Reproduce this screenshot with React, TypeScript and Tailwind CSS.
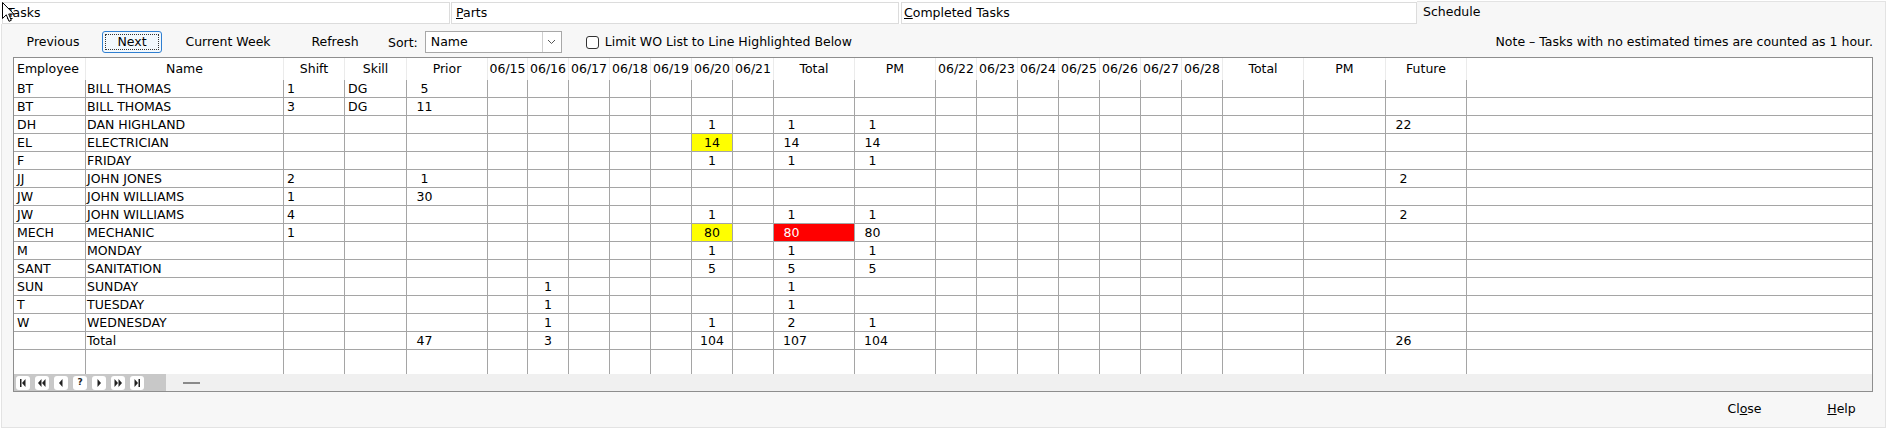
import React from "react";

type Align = "left" | "center" | "num" | "none";

interface Col {
  h: string;
  align: Align;
  headAlign?: "left" | "center";
}

const dates1 = ["06/15", "06/16", "06/17", "06/18", "06/19", "06/20", "06/21"];
const dates2 = ["06/22", "06/23", "06/24", "06/25", "06/26", "06/27", "06/28"];

const cols: Col[] = [
  { h: "Employee", align: "left", headAlign: "left" },
  { h: "Name", align: "left" },
  { h: "Shift", align: "left" },
  { h: "Skill", align: "left" },
  { h: "Prior", align: "num" },
  ...dates1.map((d) => ({ h: d, align: "center" as Align })),
  { h: "Total", align: "num" },
  { h: "PM", align: "num" },
  ...dates2.map((d) => ({ h: d, align: "center" as Align })),
  { h: "Total", align: "num" },
  { h: "PM", align: "num" },
  { h: "Future", align: "num" },
  { h: "", align: "none" },
];

// column indexes
const PRIOR = 4;
const D16 = 6;
const D20 = 10;
const TOTAL = 12;
const PM = 13;
const FUTURE = 23;

type Cell = string | { v: string; bg: "yellow" | "red" };

interface Row {
  emp: string;
  name: string;
  shift?: string;
  skill?: string;
  vals?: Record<number, Cell>;
}

const rows: Row[] = [
  { emp: "BT", name: "BILL THOMAS", shift: "1", skill: "DG", vals: { [PRIOR]: "5" } },
  { emp: "BT", name: "BILL THOMAS", shift: "3", skill: "DG", vals: { [PRIOR]: "11" } },
  { emp: "DH", name: "DAN HIGHLAND", vals: { [D20]: "1", [TOTAL]: "1", [PM]: "1", [FUTURE]: "22" } },
  { emp: "EL", name: "ELECTRICIAN", vals: { [D20]: { v: "14", bg: "yellow" }, [TOTAL]: "14", [PM]: "14" } },
  { emp: "F", name: "FRIDAY", vals: { [D20]: "1", [TOTAL]: "1", [PM]: "1" } },
  { emp: "JJ", name: "JOHN JONES", shift: "2", vals: { [PRIOR]: "1", [FUTURE]: "2" } },
  { emp: "JW", name: "JOHN WILLIAMS", shift: "1", vals: { [PRIOR]: "30" } },
  { emp: "JW", name: "JOHN WILLIAMS", shift: "4", vals: { [D20]: "1", [TOTAL]: "1", [PM]: "1", [FUTURE]: "2" } },
  {
    emp: "MECH",
    name: "MECHANIC",
    shift: "1",
    vals: { [D20]: { v: "80", bg: "yellow" }, [TOTAL]: { v: "80", bg: "red" }, [PM]: "80" },
  },
  { emp: "M", name: "MONDAY", vals: { [D20]: "1", [TOTAL]: "1", [PM]: "1" } },
  { emp: "SANT", name: "SANITATION", vals: { [D20]: "5", [TOTAL]: "5", [PM]: "5" } },
  { emp: "SUN", name: "SUNDAY", vals: { [D16]: "1", [TOTAL]: "1" } },
  { emp: "T", name: "TUESDAY", vals: { [D16]: "1", [TOTAL]: "1" } },
  { emp: "W", name: "WEDNESDAY", vals: { [D16]: "1", [D20]: "1", [TOTAL]: "2", [PM]: "1" } },
  {
    emp: "",
    name: "Total",
    vals: { [PRIOR]: "47", [D16]: "3", [D20]: "104", [TOTAL]: "107", [PM]: "104", [FUTURE]: "26" },
  },
];

const gridCols =
  "grid grid-cols-[72px_198px_61px_62px_81px_40px_repeat(6,41px)_81px_81px_repeat(7,41px)_81px_82px_81px_1fr]";

function cellText(row: Row, i: number): Cell | undefined {
  if (i === 0) return row.emp;
  if (i === 1) return row.name;
  if (i === 2) return row.shift;
  if (i === 3) return row.skill;
  return row.vals?.[i];
}

const DataCell: React.FC<{ col: Col; cell?: Cell; last: boolean }> = ({ col, cell, last }) => {
  const v = typeof cell === "string" ? cell : cell?.v;
  const bg = typeof cell === "object" ? cell.bg : undefined;
  const bgClass = bg === "yellow" ? "bg-[#ffff00]" : bg === "red" ? "bg-[#ff0000] text-white" : "bg-white";
  const border = last ? "" : "border-r";
  const base = `h-[18px] pt-[2px] border-b border-[#a5a5a5] ${border} ${bgClass} flex items-center`;
  if (col.align === "num") {
    return (
      <div className={base}>
        <span className="ml-[9px] inline-block w-[17px] text-center">{v}</span>
      </div>
    );
  }
  if (col.align === "center") {
    return <div className={`${base} justify-center`}>{v}</div>;
  }
  const pad = col.h === "Name" ? "pl-[1px]" : "pl-[3px]";
  return <div className={`${base} ${pad} whitespace-nowrap`}>{v}</div>;
};

const NavIcon: React.FC<{ kind: string }> = ({ kind }) => {
  const tri = (x: number, dir: 1 | -1) =>
    dir === 1 ? `M${x} 3 L${x + 3.5} 7 L${x} 11 Z` : `M${x + 3.5} 3 L${x} 7 L${x + 3.5} 11 Z`;
  return (
    <div className="w-[14px] h-[14px] bg-white rounded-[3px] flex items-center justify-center">
      {kind === "?" ? (
        <span className="text-[9px] font-bold leading-none text-[#222]">?</span>
      ) : (
        <svg width="14" height="14" viewBox="0 0 14 14">
          {kind === "first" && (
            <>
              <rect x="4" y="3" width="1.5" height="8" fill="#222" />
              <path d={tri(6, -1)} fill="#222" />
            </>
          )}
          {kind === "prevpage" && (
            <>
              <path d={tri(3, -1)} fill="#222" />
              <path d={tri(7, -1)} fill="#222" />
            </>
          )}
          {kind === "prev" && <path d={tri(5, -1)} fill="#222" />}
          {kind === "next" && <path d={tri(5.5, 1)} fill="#222" />}
          {kind === "nextpage" && (
            <>
              <path d={tri(3.5, 1)} fill="#222" />
              <path d={tri(7.5, 1)} fill="#222" />
            </>
          )}
          {kind === "last" && (
            <>
              <path d={tri(4.5, 1)} fill="#222" />
              <rect x="8.5" y="3" width="1.5" height="8" fill="#222" />
            </>
          )}
        </svg>
      )}
    </div>
  );
};

export default function App() {
  return (
    <div className="relative w-[1890px] h-[429px] bg-white overflow-hidden text-[12.5px] text-black font-[family-name:'DejaVu_Sans',sans-serif]">
      <div className="ml-[1px] w-[1885px] h-full flex flex-col">
        {/* tab strip */}
        <div className="flex h-[24px] shrink-0 bg-white">
          <div className="ml-[1px] mt-[2px] w-[448px] h-[22px] border border-[#dcdcdc] bg-white pl-[4px] leading-[20px]">
            <span className="underline">T</span>asks
          </div>
          <div className="ml-[1px] mt-[2px] w-[448px] h-[22px] border border-[#dcdcdc] bg-white pl-[4px] leading-[20px]">
            <span className="underline">P</span>arts
          </div>
          <div className="ml-[2px] mt-[2px] w-[516px] h-[22px] border border-[#dcdcdc] bg-white pl-[2px] leading-[20px]">
            <span className="underline">C</span>ompleted Tasks
          </div>
          <div className="flex-1 mt-[1px] bg-[#f7f7f7] border-t border-r border-[#e3e3e3] pl-[6px] leading-[20px]">
            Schedule
          </div>
        </div>

        {/* schedule panel */}
        <div className="flex-1 flex flex-col bg-[#f7f7f7] border-l border-r border-b border-[#e3e3e3] mb-[1px]">
          <div className="mt-[7px] h-[22px] flex items-center">
            <button className="ml-[12px] w-[78px] h-[22px] text-center">Previous</button>
            <button className="ml-[10px] w-[60px] h-[22px] border border-[#2f7fd1] rounded-[3px] bg-[#f2f8fd] p-[2px]">
              <div className="h-full border border-dotted border-[#333] flex items-center justify-center">Next</div>
            </button>
            <button className="ml-[13px] w-[106px] h-[22px] text-center">Current Week</button>
            <button className="ml-[16px] w-[76px] h-[22px] text-center">Refresh</button>
            <span className="ml-[15px] mt-[2px]">Sort:</span>
            <div className="ml-[7px] w-[137px] h-[22px] border border-[#a8a8a8] bg-white flex">
              <span className="flex-1 pl-[5px] leading-[20px]">Name</span>
              <span className="w-[19px] border-l border-[#cfcfcf] flex items-center justify-center">
                <svg width="9" height="6" viewBox="0 0 9 6">
                  <path d="M1 1 L4.5 4.5 L8 1" fill="none" stroke="#555" strokeWidth="1" />
                </svg>
              </span>
            </div>
            <div className="ml-[24px] w-[13px] h-[13px] border border-[#333] rounded-[3px] bg-white" />
            <span className="ml-[6px]">Limit WO List to Line Highlighted Below</span>
            <span className="ml-auto mr-[12px]">Note – Tasks with no estimated times are counted as 1 hour.</span>
          </div>

          {/* grid */}
          <div className="mt-[4px] ml-[11px] w-[1860px] h-[335px] border border-[#8e8e8e] bg-white flex flex-col">
            <div className={`${gridCols} h-[22px]`}>
              {cols.map((c, i) => (
                <div
                  key={i}
                  className={`${i === cols.length - 1 ? "" : "border-r border-[#ebebeb]"} flex items-center whitespace-nowrap overflow-hidden ${
                    c.headAlign === "left" ? "pl-[3px]" : "justify-center"
                  }`}
                >
                  {c.h}
                </div>
              ))}
            </div>
            {rows.map((r, ri) => (
              <div key={ri} className={gridCols}>
                {cols.map((c, i) => (
                  <DataCell key={i} col={c} cell={cellText(r, i)} last={i === cols.length - 1} />
                ))}
              </div>
            ))}
            <div className={`${gridCols} flex-1`}>
              {cols.map((_, i) => (
                <div key={i} className={i === cols.length - 1 ? "" : "border-r border-[#a5a5a5]"} />
              ))}
            </div>
            <div className="h-[17px] flex">
              <div className="w-[152px] bg-[#c8c8c8] flex items-center gap-[5px] pl-[2px]">
                {["first", "prevpage", "prev", "?", "next", "nextpage", "last"].map((k) => (
                  <NavIcon key={k} kind={k} />
                ))}
              </div>
              <div className="flex-1 bg-[#f0f0f0] flex items-center">
                <div className="ml-[17px] w-[17px] h-[2px] bg-[#8a8a8a]" />
              </div>
            </div>
          </div>

          {/* footer */}
          <div className="flex-1 flex items-center justify-end">
            <button className="w-[75px] h-[22px] text-center">
              Cl<span className="underline">o</span>se
            </button>
            <button className="ml-[22px] mr-[6px] w-[75px] h-[22px] text-center">
              <span className="underline">H</span>elp
            </button>
          </div>
        </div>
      </div>

      {/* mouse pointer */}
      <svg className="absolute left-[2px] top-[2px]" width="13" height="21" viewBox="0 0 13 21">
        <path
          d="M0.5 0.5 L0.5 16.5 L4.3 12.8 L7 19.3 L9.3 18.3 L6.7 12 L11.8 12 Z"
          fill="white"
          stroke="black"
          strokeWidth="1"
          strokeLinejoin="miter"
        />
      </svg>
    </div>
  );
}
